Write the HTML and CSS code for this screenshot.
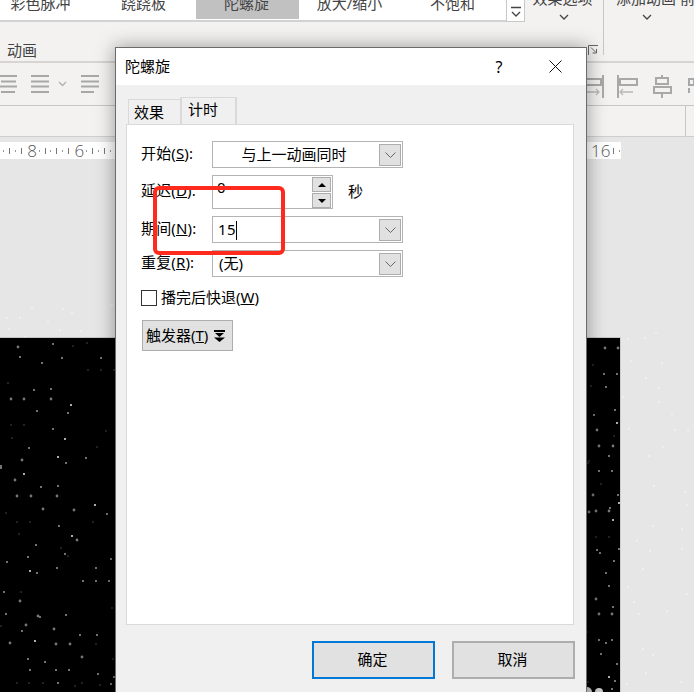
FILE: index.html
```html
<!DOCTYPE html>
<html lang="zh">
<head>
<meta charset="utf-8">
<title>陀螺旋</title>
<link rel="stylesheet" href="styles.css">
</head>
<body>
<div class="app">
  <div class="ribbon">
    <div class="group">
      <div class="gallery-row">
        <div class="gallery">
          <div class="gallery-item"><span>彩色脉冲</span></div>
          <div class="gallery-item"><span>跷跷板</span></div>
          <div class="gallery-item selected"><span>陀螺旋</span></div>
          <div class="gallery-item"><span>放大/缩小</span></div>
          <div class="gallery-item"><span>不饱和</span></div>
        </div>
        <div class="gallery-more">
          <svg width="12" height="14" viewBox="0 0 12 14"><path d="M1 3.5h10M2 8l4 4 4-4" fill="none" stroke="#444" stroke-width="1.3"/></svg>
        </div>
        <div class="action action-effect">
          <span class="action-text">效果选项</span>
          <svg class="chev" width="10" height="6" viewBox="0 0 10 6"><path d="M1 1l4 4 4-4" fill="none" stroke="#444" stroke-width="1.3"/></svg>
        </div>
      </div>
      <div class="group-footer">
        <span class="group-label">动画</span>
        <svg width="11" height="10" viewBox="0 0 11 10"><path d="M.5 10V.5H10M3 2.5l5 5M8.500 4v4H4.500" fill="none" stroke="#666" stroke-width="1"/></svg>
      </div>
    </div>
    <div class="sep"></div>
    <div class="action action-add">
      <span class="action-text">添加动画 前</span>
      <svg class="chev chev-add" width="10" height="6" viewBox="0 0 10 6"><path d="M1 1l4 4 4-4" fill="none" stroke="#444" stroke-width="1.3"/></svg>
    </div>
  </div>

  <div class="toolbar">
    <div class="tool-left">
      <svg width="100" height="20" viewBox="0 0 100 20"><path d="M0 1h17M1 6.500h15M0 11.500h17M1 17h14M31 1h18M31 6.500h18M31 11.500h18M31 17h18M81 1h18M81 6.500h18M81 11.500h18M81 17h13" stroke="#a8a8a8" stroke-width="2" fill="none"/><path d="M59 7l3.500 3.500L66 7" stroke="#b0b0b0" stroke-width="1.300" fill="none"/></svg>
    </div>
    <div class="tool-right">
      <svg width="109" height="24" viewBox="0 0 109 24"><g fill="none" stroke="#a8a8a8" stroke-width="2"><path d="M18 0v23M1 4h15v6H1zM33 0v23M35 4h17v6H35z"/><path d="M71 3h12v6H71zM69 12h17v6H69zM77 0v3M77 18v5M104 4h5v6h-5zM104 13v5"/></g><g fill="none" stroke="#b8b8b8" stroke-width="1.300"><path d="M1 17h13M11 14l3 3-3 3M48 17H35M38 14l-3 3 3 3"/></g></svg>
    </div>
  </div>

  <div class="subbar">
    <div class="subbar-panel"></div>
  </div>

  <div class="work">
    <svg class="haze" viewBox="0 137 694 555" width="694" height="555">
      <path fill="none" stroke="#fff" stroke-width="2" stroke-linecap="round" opacity=".5" d="M654 486h0M685 492h0M650 551h0M643 569h0M653 655h0M643 649h0M646 673h0M681 682h0M663 447h0M649 456h0M687 505h0M653 526h0M682 529h0M637 541h0M682 549h0M628 587h0M634 602h0M667 611h0M639 614h0M687 594h0M627 684h0M628 339h0M645 338h0M656 333h0M631 361h0M662 363h0M646 378h0M659 388h0M659 402h0M623 397h0M672 414h0M629 429h0M675 430h0M688 430h0M63 309h0M48 322h0M60 330h0M81 331h0M7 318h0M20 318h0M9 329h0M32 308h0M25 337h0M112 305h0M72 313h0"/>
    </svg>
    <div class="ruler">
      <span class="rn"><b>8</b></span><span class="rn"><b>6</b></span><span class="rn"><b>4</b></span><span class="rn"><b>2</b></span><span class="rn"><b>0</b></span><span class="rn"><b>2</b></span><span class="rn"><b>4</b></span><span class="rn"><b>6</b></span><span class="rn"><b>8</b></span><span class="rn"><b>10</b></span><span class="rn"><b>12</b></span><span class="rn"><b>14</b></span><span class="rn"><b>16</b></span>
    </div>
    <div class="slide">
      <svg class="stars" viewBox="0 338 620 354" width="620" height="354">
        <g fill="none" stroke-linecap="round">
          <path stroke="#fff" stroke-width="1.800" d="M71 405h0M65 439h0M58 457h0M24 474h0M95 505h0M72 536h0M30 571h0M35 641h0M619 503h0M613 520h0M617 423h0M609 677h0"/>
          <path stroke="#aaa" stroke-width="1.800" d="M53 344h0M20 357h0M62 358h0M101 358h0M42 363h0M34 390h0M51 389h0M37 411h0M68 413h0M53 429h0M29 448h0M86 458h0M66 463h0M1 466h0M1 468h0M41 487h0M58 486h0M107 514h0M59 526h0M36 545h0M65 554h0M28 557h0M111 559h0M7 562h0M37 573h0M57 568h0M96 568h0M83 581h0M96 581h0M109 581h0M4 592h0M6 614h0M40 617h0M66 615h0M22 631h0M80 635h0M97 635h0M28 659h0M45 662h0M30 670h0M56 670h0M69 670h0M98 674h0M114 677h0M58 683h0M111 684h0M609 456h0M599 471h0M612 471h0M618 495h0M610 508h0M597 550h0M600 553h0M619 549h0M614 561h0M606 573h0M609 586h0M613 607h0M599 640h0M606 643h0M612 640h0M601 654h0M617 664h0M615 681h0M612 689h0M604 374h0M617 374h0M606 387h0M615 410h0M594 415h0"/>
          <path stroke="#777" stroke-width="2.800" d="M18 347h0M11 399h0M24 399h0M51 399h0M22 460h0M15 480h0M17 496h0M31 496h0M57 496h0M43 509h0M74 510h0M77 540h0M20 601h0M38 616h0M26 625h0M54 629h0M10 643h0M56 644h0M70 644h0M82 657h0M599 446h0M613 446h0M593 495h0M589 512h0M596 511h0M609 511h0M596 599h0M599 614h0M612 614h0M605 348h0M618 348h0M597 430h0"/>
          <path stroke="#555" stroke-width="1.500" d="M73 346h0M87 343h0M88 370h0M101 370h0M114 370h0M8 383h0M11 425h0M24 425h0M106 431h0M12 438h0M97 447h0M6 513h0M17 522h0M30 522h0M93 522h0M19 534h0M61 548h0M68 556h0M21 592h0M112 608h0M1 626h0M96 644h0M113 659h0M17 683h0M29 683h0M43 683h0M75 686h0M82 683h0M100 685h0M589 461h0M588 463h0M601 484h0M596 537h0M609 537h0M587 632h0M588 682h0M593 365h0M591 386h0M614 436h0"/>
        </g>
        <circle cx="587" cy="692" r="5" fill="#ccc"/><circle cx="599" cy="692" r="4" fill="#ccc"/>
      </svg>
    </div>
  </div>

  <div class="dialog">
    <div class="dialog-head">
      <span class="dialog-title">陀螺旋</span>
      <span class="dialog-help">?</span>
      <svg class="dialog-close" width="13" height="13" viewBox="0 0 13 13"><path d="M.5.5l12 12M12.500.5l-12 12" stroke="#111" stroke-width="1" fill="none"/></svg>
    </div>
    <div class="dialog-body">
      <div class="tabs">
        <div class="tab">效果</div>
        <div class="tab active">计时</div>
      </div>
      <div class="panel">
        <div class="form">
          <label class="field-label">开始(<u>S</u>):</label>
          <div class="combo combo-center"><span class="combo-text">与上一动画同时</span><span class="combo-btn"><svg width="11" height="6" viewBox="0 0 11 6"><path d="M.5.5l5 5 5-5" fill="none" stroke="#666"/></svg></span></div>

          <label class="field-label">延迟(<u>D</u>):</label>
          <div class="delay-row">
            <div class="spin">
              <span class="spin-value">0</span>
              <div class="spin-btns">
                <span class="spin-btn"><svg width="8" height="4" viewBox="0 0 8 4"><path d="M4 0L8 4H0z" fill="#000"/></svg></span>
                <span class="spin-btn"><svg width="8" height="4" viewBox="0 0 8 4"><path d="M0 0h8L4 4z" fill="#000"/></svg></span>
              </div>
            </div>
            <span class="unit">秒</span>
          </div>

          <label class="field-label">期间(<u>N</u>):</label>
          <div class="combo"><span class="combo-text"><span class="value-15">15</span><i class="caret"></i></span><span class="combo-btn"><svg width="11" height="6" viewBox="0 0 11 6"><path d="M.5.5l5 5 5-5" fill="none" stroke="#666"/></svg></span></div>

          <label class="field-label">重复(<u>R</u>):</label>
          <div class="combo"><span class="combo-text combo-none">(无)</span><span class="combo-btn"><svg width="11" height="6" viewBox="0 0 11 6"><path d="M.5.5l5 5 5-5" fill="none" stroke="#666"/></svg></span></div>
        </div>
        <div class="check-row"><span class="checkbox"></span><span class="check-text">播完后快退(<u>W</u>)</span></div>
        <div class="trigger"><span class="trigger-text">触发器(<u>T</u>)</span>
          <svg width="11" height="12" viewBox="0 0 11 12"><path d="M0 0h11v2H0zM1 3h9L5.500 7zM0 7.500h11L5.500 12z" fill="#000"/></svg>
        </div>
      </div>
      <div class="dialog-foot">
        <div class="btn primary"><span>确定</span></div>
        <div class="btn"><span>取消</span></div>
      </div>
    </div>
    <div class="mark"></div>
  </div>
</div>
</body>
</html>
```
FILE: styles.css
```css
* { box-sizing: border-box; }
html, body { margin: 0; padding: 0; overflow: hidden; }
body { font-family: "Noto Sans", "Noto Sans CJK SC", sans-serif; font-size: 15px; color: #111; }
.app { position: relative; width: 694px; height: 692px; overflow: hidden; display: flex; flex-direction: column; background: #f3f2f1; }

/* ribbon */
.ribbon { display: flex; height: 63px; flex: none; border-bottom: 2px solid #d6d5d4; overflow: hidden; }
.group { width: 603px; height: 61px; flex: none; display: flex; flex-direction: column; }
.gallery-row { display: flex; height: 22px; flex: none; }
.gallery { display: flex; width: 516px; margin-left: -10px; flex: none; height: 22px; background: #fff; border-bottom: 2px solid #d2d2d2; }
.gallery-item { width: 103px; height: 19px; overflow: hidden; text-align: center; color: #444; }
.gallery-item span { display: block; line-height: 20px; margin: -7px 2px 0 0; white-space: nowrap; }
.gallery-item.selected { background: #c1c1c1; }
.gallery-more { width: 19px; height: 22px; flex: none; background: #fff; border: 1px solid #c8c8c8; border-top: 0; display: flex; align-items: flex-end; justify-content: center; padding-bottom: 3px; }
.action { display: flex; flex-direction: column; align-items: center; color: #444; }
.action-text { line-height: 20px; white-space: nowrap; }
.action-effect { width: 78px; flex: none; }
.action-effect .action-text { margin-top: -12px; margin-left: -3px; }
.chev { margin-top: 6px; }
.group-footer { display: flex; justify-content: space-between; align-items: flex-end; height: 33px; padding: 0 4px 0 7px; }
.group-label { line-height: 20px; color: #444; margin-bottom: -5px; }
.sep { width: 1px; height: 55px; background: #c8c6c4; flex: none; }
.action-add { align-items: flex-start; padding-left: 12px; flex: none; width: 90px; }
.action-add .action-text { margin-top: -12px; }
.chev-add { margin-left: 26px; }

/* toolbar */
.toolbar { height: 43px; flex: none; display: flex; justify-content: space-between; border-bottom: 1px solid #c8c6c4; }
.tool-left { padding-top: 12px; }
.tool-right { padding-top: 12px; }
.tool-left svg, .tool-right svg { display: block; }
.subbar { height: 31px; flex: none; display: flex; justify-content: flex-end; border-bottom: 1px solid #cfcecd; }
.subbar-panel { width: 9px; border-left: 1px solid #c8c6c4; }

/* work area */
.work { position: relative; flex: 1; background: #e6e6e6; padding-top: 5px; min-height: 0; }
.haze { position: absolute; left: 0; top: 0; }
.ruler { position: relative; display: flex; width: 621px; height: 17px; padding-left: 8.3px; overflow: hidden; background-color: #fff;
  background-image: repeating-linear-gradient(90deg, transparent 0 9px, #777 9px 10px, transparent 10px 11.85px), repeating-linear-gradient(90deg, transparent 0 3px, #999 3px 4px, transparent 4px 11.85px);
  background-size: 100% 6px, 100% 2px; background-position: 0 center, 0 center; background-repeat: no-repeat; }
.rn { width: 47.4px; flex: none; text-align: center; line-height: 17px; font-size: 17px; color: #555; }
.rn b { font-weight: 300; font-family: "Open Sans", sans-serif; background: #fff; padding: 0 2px; }
.slide { position: relative; width: 621px; height: 355px; margin-top: 178px; background: #000; border-top: 1px solid #c4c4c4; border-right: 1px solid #cfcfcf; }
.stars { display: block; }

/* dialog */
.dialog { position: absolute; left: 115px; top: 47px; width: 472px; height: 660px; background: #f0f0f0; border: 1px solid #6b6b6b; box-shadow: 0 0 18px rgba(0,0,0,.38); color: #000; }
.dialog-head { height: 37px; background: #fff; display: flex; align-items: center; padding-left: 9px; }
.dialog-title { line-height: 20px; flex: 1; margin-bottom: 1px; }
.dialog-help { width: 16px; text-align: center; font-size: 16px; line-height: 20px; margin-right: 42px; }
.dialog-close { margin-right: 24px; }
.dialog-body { padding: 12px 12px 0 10px; }
.tabs { display: flex; align-items: flex-end; padding-left: 2px; height: 27px; }
.tab { width: 52px; height: 25px; border: 1px solid #d9d9d9; border-bottom: 0; border-right: 0; line-height: 25px; padding-left: 5px; }
.tab.active { width: 57px; height: 27px; border-right: 1px solid #d9d9d9; border-width: 1px 2px 0; line-height: 22px; padding-left: 6px; }
.panel { height: 501px; background: #fff; border: 1px solid #d9d9d9; padding: 16px 14px 0; }
.form { display: grid; grid-template-columns: 71px 191px; row-gap: 7px; align-items: center; }
.field-label { line-height: 20px; white-space: nowrap; padding-bottom: 4px; letter-spacing: .15px; }
.combo { height: 27px; display: flex; align-items: stretch; border: 1px solid #b4b4b4; padding: 2px 1px 1px 0; background: #fff; }
.combo-text { flex: 1; padding-left: 5px; line-height: 20px; }
.combo-none { padding-left: 6px; }
.combo-center .combo-text { text-align: center; padding: 0 4px 0 0; }
.combo-btn { width: 22px; flex: none; background: #e1e1e1; border: 1px solid #adadad; display: flex; align-items: center; justify-content: center; }
.delay-row { display: flex; align-items: center; gap: 15px; }
.spin { width: 121px; height: 34px; flex: none; border: 1px solid #b4b4b4; display: flex; justify-content: space-between; padding: 1px 1px 0 4px; }
.spin-value { line-height: 20px; margin-top: 0; }
.spin-btns { display: flex; flex-direction: column; gap: 1px; width: 19px; }
.spin-btn { height: 15px; background: #e1e1e1; border: 1px solid #adadad; display: flex; align-items: center; justify-content: center; }
.unit { line-height: 20px; margin-bottom: 2px; }
.value-15 { letter-spacing: .5px; }
.caret { display: inline-block; width: 1px; height: 19px; background: #000; vertical-align: -5px; }
.check-row { display: flex; align-items: center; gap: 4px; margin-top: 13px; height: 16px; line-height: 16px; white-space: nowrap; }
.check-text { margin-top: -2px; }
.checkbox { width: 16px; height: 16px; border: 1px solid #333; background: #fff; flex: none; }
.trigger { margin: 14px 0 0 1px; width: 91px; height: 31px; background: #e1e1e1; border: 1px solid #adadad; display: flex; align-items: center; gap: 6px; padding-left: 3px; white-space: nowrap; }
.trigger-text { margin-top: -2px; }
.dialog-foot { display: flex; justify-content: flex-end; gap: 17px; margin: 16px -1px 0 0; }
.btn { width: 123px; height: 38px; background: #e1e1e1; border: 2px solid #adadad; display: flex; align-items: center; justify-content: center; padding-bottom: 3px; }
.btn span { margin-right: 2px; }
.btn.primary { border-color: #0078d7; }
.mark { position: absolute; left: 37px; top: 138px; width: 132px; height: 69px; border: 4px solid #ff2a1e; border-radius: 6px; }
```
